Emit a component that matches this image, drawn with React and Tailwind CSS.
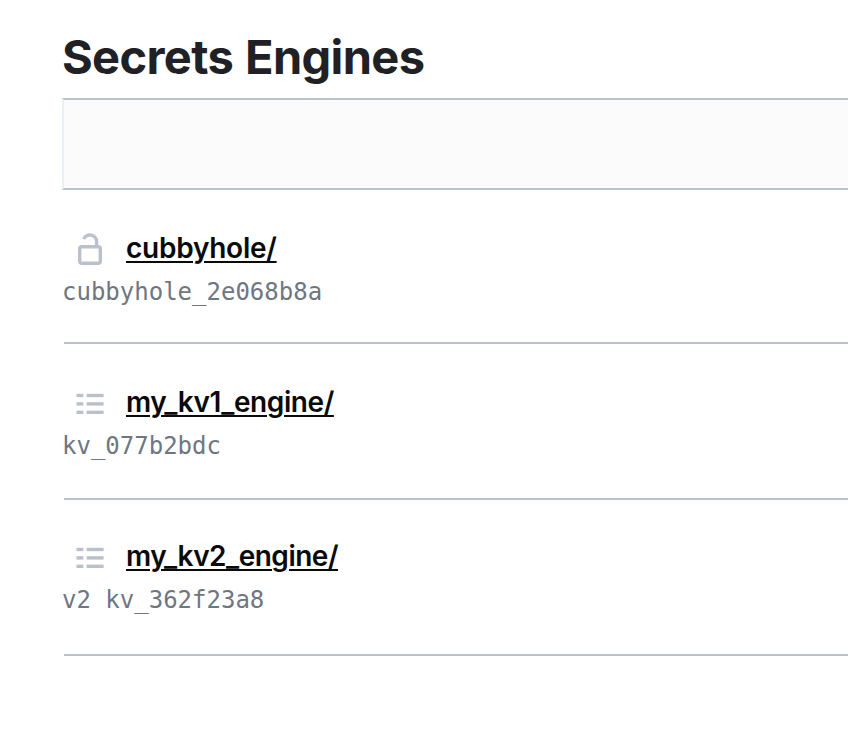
const List = () => (
  <svg className="h-8 w-8" viewBox="0 0 32 32" fill="#bac1cc">
    {[5.8, 14.2, 22.6].map((y) => (
      <g key={y}>
        <rect x="2.5" y={y} width="6.8" height="3.4" />
        <rect x="12.6" y={y} width="17" height="3.4" />
      </g>
    ))}
  </svg>
);

const Lock = () => (
  <svg className="h-8 w-8 overflow-visible" viewBox="0 0 32 32" fill="none" stroke="#bac1cc" strokeWidth="3.4">
    <rect x="5.7" y="12.7" width="20.6" height="16.6" rx="2" />
    <path d="M9.6 5A6.8 6.8 0 0 1 22.6 7.600V12.700" />
  </svg>
);

const rows = [
  { icon: <Lock />, name: "cubbyhole/", id: "cubbyhole_2e068b8a", size: "h-[154px]", head: "h-[84px]", tracking: "tracking-[-0.25px]" },
  { icon: <List />, name: "my_kv1_engine/", id: "kv_077b2bdc", size: "h-[156px]", head: "h-[84px]", tracking: "tracking-[-0.42px]" },
  { icon: <List />, name: "my_kv2_engine/", id: "v2 kv_362f23a8", size: "h-[156px]", head: "h-[82px]", tracking: "tracking-[-0.5px]" },
];

export default function App() {
  return (
    <div className="h-[742px] overflow-hidden bg-white pl-[62px] pt-[28px] font-['Inter',sans-serif]">
      <h1 className="h-[70px] whitespace-nowrap text-[47px] font-bold leading-[58px] tracking-[-0.65px] [word-spacing:1.5px] text-[#1f2124]">Secrets Engines</h1>
      <div className="h-[92px] border-y-2 border-l-2 border-y-[#bac1cc] border-l-[#ebeef2] bg-[#fbfbfc]" />
      {rows.map((row) => (
        <div key={row.name} className={`ml-[2px] border-b-2 border-[#bac1cc] ${row.size}`}>
          <div className={`flex items-end pl-[10px] ${row.head}`}>
            <div className="mb-[8px]">{row.icon}</div>
            <a className={`mb-[7px] ml-[20px] whitespace-nowrap text-[28px] font-semibold leading-[38px] text-[#0a0a0a] underline decoration-2 underline-offset-[3px] ${row.tracking}`}>{row.name}</a>
          </div>
          <code className="-ml-[2px] block whitespace-pre font-['DejaVu_Sans_Mono',monospace] text-[24px] leading-[36px] text-[#6f7682]">{row.id}</code>
        </div>
      ))}
    </div>
  );
}
